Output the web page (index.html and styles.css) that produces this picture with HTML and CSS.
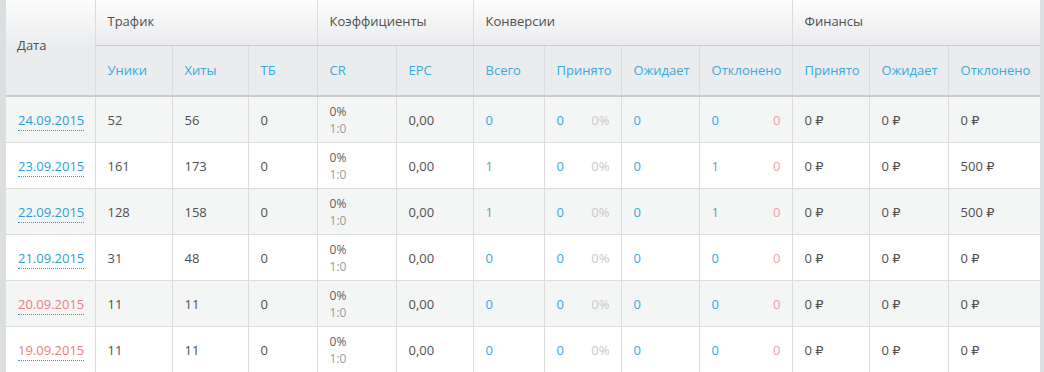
FILE: index.html
```html
<!DOCTYPE html>
<html lang="ru">
<head>
<meta charset="utf-8">
<link rel="stylesheet" href="styles.css">
</head>
<body>
<div class="wrap">
<table class="stats">
<colgroup>
<col style="width:89px"><col style="width:77px"><col style="width:76px"><col style="width:69px">
<col style="width:79px"><col style="width:77px"><col style="width:71px"><col style="width:77px">
<col style="width:78px"><col style="width:93px"><col style="width:77px"><col style="width:79px"><col style="width:92px">
</colgroup>
<thead>
<tr class="h1">
<th rowspan="2" class="date-h">Дата</th>
<th colspan="3">Трафик</th>
<th colspan="2">Коэффициенты</th>
<th colspan="4">Конверсии</th>
<th colspan="3">Финансы</th>
</tr>
<tr class="h2">
<th>Уники</th><th>Хиты</th><th>ТБ</th>
<th>CR</th><th>EPC</th>
<th>Всего</th><th>Принято</th><th>Ожидает</th><th>Отклонено</th>
<th>Принято</th><th>Ожидает</th><th>Отклонено</th>
</tr>
</thead>
<tbody>
<tr>
<td><a class="date">24.09.2015</a></td><td>52</td><td>56</td><td>0</td>
<td><div class="cr">0%</div><div class="ratio">1:0</div></td><td>0,00</td>
<td class="blue">0</td><td><div class="pair"><span class="blue">0</span><span class="muted">0%</span></div></td><td class="blue">0</td>
<td><div class="pair"><span class="blue">0</span><span class="pink">0</span></div></td>
<td>0 ₽</td><td>0 ₽</td><td>0 ₽</td>
</tr>
<tr>
<td><a class="date">23.09.2015</a></td><td>161</td><td>173</td><td>0</td>
<td><div class="cr">0%</div><div class="ratio">1:0</div></td><td>0,00</td>
<td class="dim">1</td><td><div class="pair"><span class="blue">0</span><span class="muted">0%</span></div></td><td class="blue">0</td>
<td><div class="pair"><span class="dim">1</span><span class="pink">0</span></div></td>
<td>0 ₽</td><td>0 ₽</td><td>500 ₽</td>
</tr>
<tr>
<td><a class="date">22.09.2015</a></td><td>128</td><td>158</td><td>0</td>
<td><div class="cr">0%</div><div class="ratio">1:0</div></td><td>0,00</td>
<td class="dim">1</td><td><div class="pair"><span class="blue">0</span><span class="muted">0%</span></div></td><td class="blue">0</td>
<td><div class="pair"><span class="dim">1</span><span class="pink">0</span></div></td>
<td>0 ₽</td><td>0 ₽</td><td>500 ₽</td>
</tr>
<tr>
<td><a class="date">21.09.2015</a></td><td>31</td><td>48</td><td>0</td>
<td><div class="cr">0%</div><div class="ratio">1:0</div></td><td>0,00</td>
<td class="blue">0</td><td><div class="pair"><span class="blue">0</span><span class="muted">0%</span></div></td><td class="blue">0</td>
<td><div class="pair"><span class="blue">0</span><span class="pink">0</span></div></td>
<td>0 ₽</td><td>0 ₽</td><td>0 ₽</td>
</tr>
<tr>
<td><a class="date weekend">20.09.2015</a></td><td>11</td><td>11</td><td>0</td>
<td><div class="cr">0%</div><div class="ratio">1:0</div></td><td>0,00</td>
<td class="blue">0</td><td><div class="pair"><span class="blue">0</span><span class="muted">0%</span></div></td><td class="blue">0</td>
<td><div class="pair"><span class="blue">0</span><span class="pink">0</span></div></td>
<td>0 ₽</td><td>0 ₽</td><td>0 ₽</td>
</tr>
<tr>
<td><a class="date weekend">19.09.2015</a></td><td>11</td><td>11</td><td>0</td>
<td><div class="cr">0%</div><div class="ratio">1:0</div></td><td>0,00</td>
<td class="blue">0</td><td><div class="pair"><span class="blue">0</span><span class="muted">0%</span></div></td><td class="blue">0</td>
<td><div class="pair"><span class="blue">0</span><span class="pink">0</span></div></td>
<td>0 ₽</td><td>0 ₽</td><td>0 ₽</td>
</tr>
</tbody>
</table>
</div>
</body>
</html>
```
FILE: styles.css
```css
html, body {
  margin: 0;
  padding: 0;
  background: #dcdfe2;
  height: 100%;
  overflow: hidden;
}
.wrap {
  padding-left: 6px;
  padding-right: 4px;
}
.stats {
  width: 1034px;
  table-layout: fixed;
  border-collapse: collapse;
  font-family: "Open Sans", "DejaVu Sans", sans-serif;
  font-size: 13px;
  color: #505050;
  background: #fff;
}
.stats th, .stats td {
  text-align: left;
  padding: 0 11px 0 12px;
  border-left: 1px solid #dcdcdc;
  border-right: 1px solid #dcdcdc;
  vertical-align: middle;
  white-space: nowrap;
}
.stats th {
  font-weight: normal;
}
.stats tr > :first-child { border-left: none; }
.stats tr > :last-child { border-right: none; }
.h1 th {
  height: 42px;
  color: #4f4f4f;
  background: linear-gradient(#fdfdfd, #eaebed);
  border-bottom: 1px solid #cbcbcb;
  padding-bottom: 3px;
}
.h1 th.date-h {
  border-left: none;
  padding-left: 11px;
  background: linear-gradient(#fcfcfc 0%, #ebecee 50%, #ebecee 100%);
  border-bottom: 2px solid #cbcbcb;
  padding-bottom: 6px;
}
.h2 th {
  height: 48px;
  color: #3aa9dd;
  background: #ebecee;
  border-bottom: 2px solid #cbcbcb;
  padding-bottom: 1px;
}
.h2 th:first-child { border-left: 1px solid #dcdcdc; }
.stats td {
  height: 45px;
  border-bottom: 1px solid #dcdcdc;
}
tbody tr:nth-child(odd) td { background: #f4f5f5; }
.date {
  color: #2b9fd9;
  text-decoration: none;
  border-bottom: 1px dotted #2b9fd9;
  padding-bottom: 1px;
}
.date.weekend { color: #f17b85; }
.cr {
  font-size: 12px;
  line-height: 17px;
  color: #606060;
}
.ratio {
  font-size: 12px;
  line-height: 17px;
  color: #999;
}
.pair {
  display: flex;
  justify-content: space-between;
}
.blue { color: #3aa9e0; }
.dim { color: #5f9cc6; }
.muted { color: #c9c9c9; }
.pink { color: #f0a2a6; }
```
